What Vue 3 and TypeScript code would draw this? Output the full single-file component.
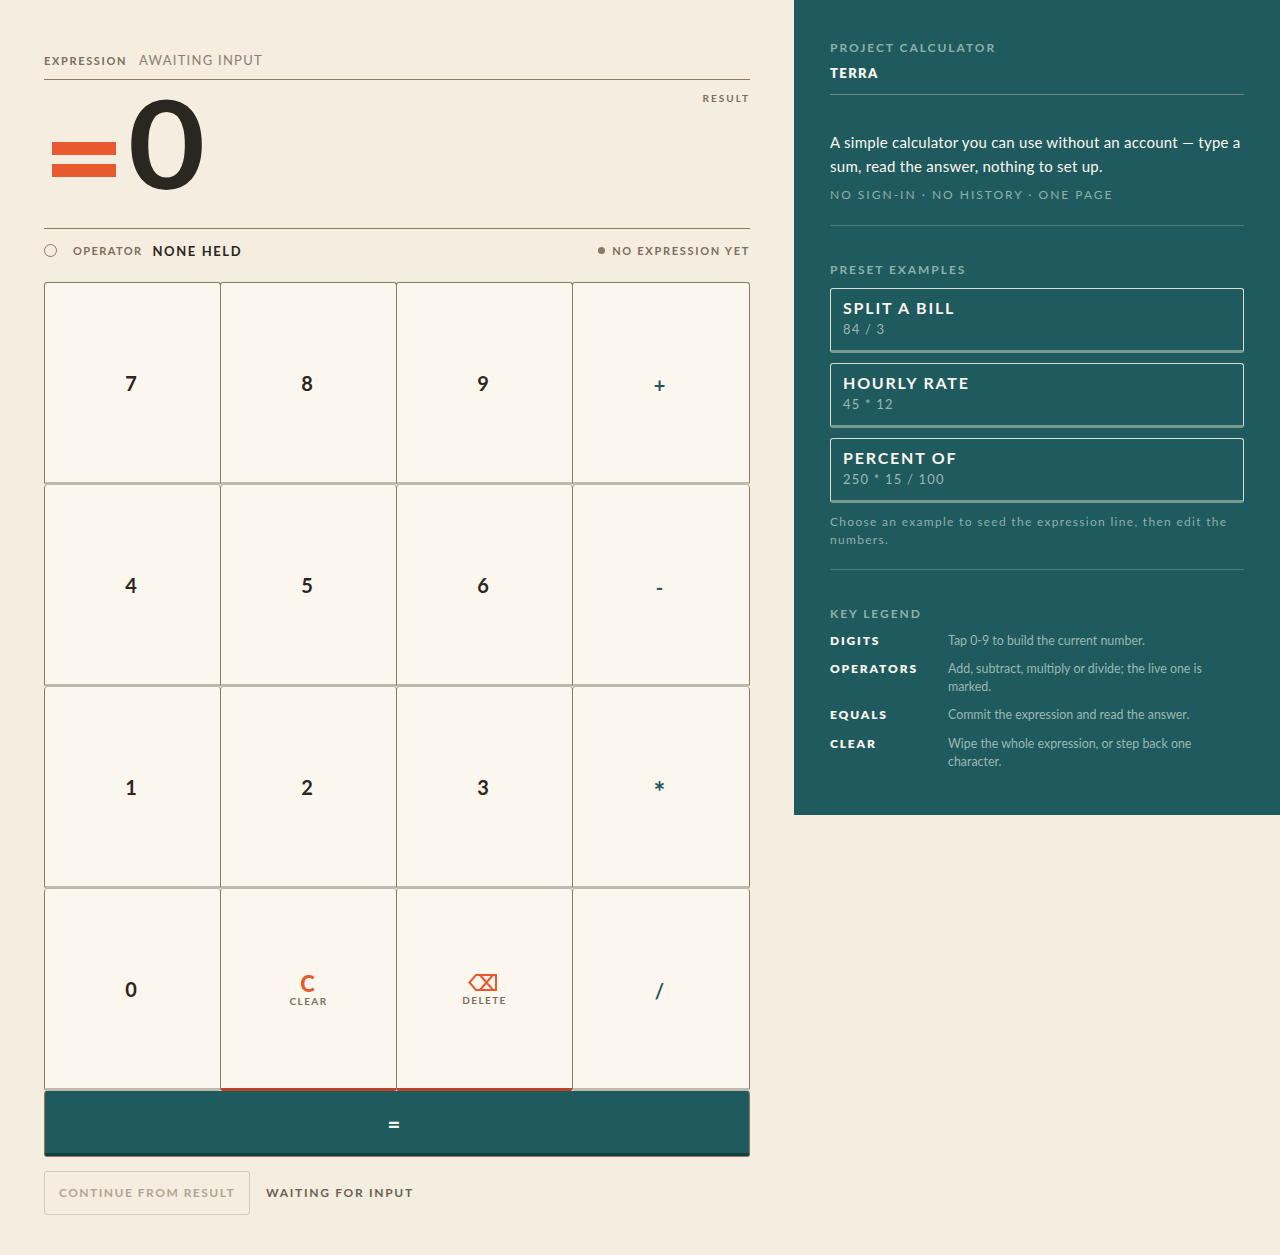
<script setup lang="ts">
interface KeyDef { label: string; kind: 'digit' | 'op' | 'clear' | 'del'; sub?: string }
const keys: KeyDef[] = [
  { label: '7', kind: 'digit' }, { label: '8', kind: 'digit' }, { label: '9', kind: 'digit' }, { label: '+', kind: 'op' },
  { label: '4', kind: 'digit' }, { label: '5', kind: 'digit' }, { label: '6', kind: 'digit' }, { label: '-', kind: 'op' },
  { label: '1', kind: 'digit' }, { label: '2', kind: 'digit' }, { label: '3', kind: 'digit' }, { label: '*', kind: 'op' },
  { label: '0', kind: 'digit' }, { label: 'C', kind: 'clear', sub: 'CLEAR' }, { label: '⌫', kind: 'del', sub: 'DELETE' }, { label: '/', kind: 'op' },
]
const presets = [
  { name: 'SPLIT A BILL', expr: '84 / 3' },
  { name: 'HOURLY RATE', expr: '45 * 12' },
  { name: 'PERCENT OF', expr: '250 * 15 / 100' },
]
const legend = [
  { k: 'DIGITS', v: 'Tap 0-9 to build the current number.' },
  { k: 'OPERATORS', v: 'Add, subtract, multiply or divide; the live one is marked.' },
  { k: 'EQUALS', v: 'Commit the expression and read the answer.' },
  { k: 'CLEAR', v: 'Wipe the whole expression, or step back one character.' },
]
</script>

<template>
  <div class="page">
    <main class="left">
      <div class="expr-row">
        <span class="expr-label">EXPRESSION</span>
        <span class="expr-value">AWAITING INPUT</span>
      </div>
      <div class="display">
        <div class="big"><span class="eq"><i></i><i></i></span><span class="zero">0</span></div>
        <span class="result-label">RESULT</span>
      </div>
      <div class="status">
        <div class="status-l">
          <span class="ring"></span>
          <span class="op-label">OPERATOR</span>
          <span class="op-value">NONE HELD</span>
        </div>
        <div class="status-r"><span class="dot"></span>NO EXPRESSION YET</div>
      </div>
      <div class="pad">
        <button v-for="k in keys" :key="k.label" class="key" :class="k.kind">
          <template v-if="k.kind === 'del'">
            <svg class="bs" width="29" height="17" viewBox="0 0 29 17" fill="none" stroke="#e8592f" stroke-width="2">
              <path d="M28 1H8L1.4 8.5 8 16h20z" />
              <path d="M12 1l13 15M25 1L12 16" />
            </svg>
          </template>
          <span v-else class="key-main">{{ k.label }}</span>
          <span v-if="k.sub" class="key-sub">{{ k.sub }}</span>
        </button>
        <button class="key-eq">=</button>
      </div>
      <div class="foot">
        <button class="continue">CONTINUE FROM RESULT</button>
        <span class="waiting">WAITING FOR INPUT</span>
      </div>
    </main>
    <aside class="side">
      <section class="head">
        <div class="s-title first">PROJECT CALCULATOR</div>
        <div class="brand">TERRA</div>
      </section>
      <section class="intro">
        <p class="lead">A simple calculator you can use without an account — type a sum, read the answer, nothing to set up.</p>
        <div class="tags">NO SIGN-IN · NO HISTORY · ONE PAGE</div>
      </section>
      <section class="presets">
        <div class="s-title">PRESET EXAMPLES</div>
        <div class="preset-list">
          <button v-for="p in presets" :key="p.name" class="preset">
            <span class="p-name">{{ p.name }}</span>
            <span class="p-expr">{{ p.expr }}</span>
          </button>
        </div>
        <p class="hint">Choose an example to seed the expression line, then edit the numbers.</p>
      </section>
      <section class="legend">
        <div class="s-title">KEY LEGEND</div>
        <dl class="legend-list">
          <div v-for="l in legend" :key="l.k" class="l-row">
            <dt>{{ l.k }}</dt>
            <dd>{{ l.v }}</dd>
          </div>
        </dl>
      </section>
    </aside>
  </div>
</template>

<style>
html, body { margin: 0; background: #f5ede0; }
</style>

<style scoped>
.page {
  display: grid;
  grid-template-columns: 794px 486px;
  align-items: start;
  height: 1255px;
  overflow: hidden;
  background: #f5ede0;
  font-family: "Lato", "Noto Sans", sans-serif;
  color: #2a2620;
}
.left { padding: 52px 44px 0; }
.expr-row {
  display: flex;
  align-items: baseline;
  gap: 12px;
  height: 27px;
  border-bottom: 1px solid #8a7a64;
}
.expr-label { font-size: 11px; font-weight: 700; letter-spacing: 1.65px; color: #7a6e5e; }
.expr-value { font-size: 13px; letter-spacing: 1.25px; color: #8a7f70; }
.display {
  display: flex;
  justify-content: space-between;
  align-items: flex-start;
  height: 148px;
  border-bottom: 1px solid #8a7a64;
}
.big { display: flex; align-items: center; height: 124px; }
.eq { display: flex; flex-direction: column; gap: 9px; margin: 0 12px 0 8px; padding-top: 35px; }
.eq i { display: block; width: 64px; height: 13px; background: #e8592f; }
.zero { font-size: 122px; line-height: 124px; font-weight: 700; color: #2a2620; transform: scaleX(1.09); transform-origin: left center; }
.result-label { font-size: 10px; font-weight: 700; letter-spacing: 2px; color: #7a6e5e; margin-top: 12px; }
.status {
  display: flex;
  justify-content: space-between;
  align-items: center;
  height: 43px;
  margin-bottom: 10px;
}
.status-l { display: flex; align-items: center; }
.ring { width: 11px; height: 11px; border: 1px solid #8a7a64; border-radius: 50%; margin-right: 16px; }
.op-label { font-size: 11px; font-weight: 700; letter-spacing: 1.4px; color: #7a6e5e; margin-right: 10px; }
.op-value { font-size: 13px; font-weight: 700; letter-spacing: 1.6px; color: #2a2620; }
.status-r { display: flex; align-items: center; font-size: 11px; font-weight: 700; letter-spacing: 1.7px; color: #7a6e5e; }
.dot { width: 7px; height: 7px; border-radius: 50%; background: #8a7a64; margin-right: 7px; }
.pad {
  display: grid;
  grid-template-columns: repeat(4, 176px);
  grid-template-rows: repeat(4, 202px) 66px;
  width: 706px;
}
.key {
  box-sizing: border-box;
  display: flex;
  flex-direction: column;
  align-items: center;
  justify-content: center;
  margin: 0;
  padding: 0;
  background: #fbf6ee;
  border: 1px solid #8a7a64;
  border-bottom: 3px solid #bfb8ac;
  border-radius: 3px;
  color: #2a2620;
  font-family: inherit;
  width: 177px;
  height: 203px;
}
.key:nth-child(n+5) { border-top: 0; margin-top: 1px; height: 202px; }
.key:nth-child(4n) { width: 178px; }
.key-main { font-size: 20px; font-weight: 700; line-height: 24px; }
.digit .key-main, .op .key-main { margin-right: 3px; }
.op .key-main { color: #1f5a5e; margin-top: 4px; }
.op:nth-child(12) .key-main { font-size: 28px; margin-top: 8px; }
.clear, .del { border-bottom-color: #bc4525; padding-top: 3px; }
.clear .key-main { color: #e8592f; font-size: 22px; font-weight: 900; line-height: 22px; margin-right: 2px; }
.bs { display: block; margin: 0 4px 3px 0; }
.key-sub { font-size: 10px; font-weight: 700; letter-spacing: 1.4px; color: #7a6e5e; line-height: 12px; }
.key-eq {
  grid-column: 1 / -1;
  box-sizing: border-box;
  width: 706px;
  height: 65px;
  margin-top: 1px;
  background: #1f5a5e;
  color: #fbf6ee;
  border: 1px solid #8a7a64;
  border-top-color: #1f5a5e;
  border-bottom: 3px solid #134044;
  box-shadow: 0 1px 0 #8a7a64;
  border-radius: 3px;
  font-family: inherit;
  font-size: 22px;
  font-weight: 900;
  padding: 4px 6px 0 0;
}
.foot { display: flex; align-items: center; gap: 16px; margin-top: 15px; }
.continue {
  box-sizing: border-box;
  height: 44px;
  width: 206px;
  background: transparent;
  border: 1px solid #d4cabb;
  border-radius: 3px;
  font-family: inherit;
  font-size: 12px;
  font-weight: 700;
  letter-spacing: 1.5px;
  color: #aea595;
  padding: 0 0 2px;
}
.waiting { font-size: 12px; font-weight: 700; letter-spacing: 1.7px; color: #6b6152; margin-bottom: 2px; }
.side {
  box-sizing: border-box;
  height: 815px;
  padding: 40px 36px 0;
  background: #1f5a5e;
  color: #fbf6ee;
}
.s-title { font-size: 12px; font-weight: 700; letter-spacing: 1.95px; color: #8fb0aa; line-height: 15px; }
.brand { font-size: 13px; font-weight: 800; letter-spacing: 1.4px; margin-top: 10px; line-height: 16px; color: #fbf6ee; }
.head { height: 54px; border-bottom: 1px solid #6f8a80; }
.intro { padding-top: 35px; height: 95px; border-bottom: 1px solid #4f7d7a; }
.lead { margin: 0; font-size: 15px; line-height: 24px; letter-spacing: .26px; color: #fbf6ee; }
.tags { font-size: 12px; font-weight: 400; letter-spacing: 2px; color: #8fb0aa; margin-top: 9px; line-height: 15px; }
.presets { padding-top: 36px; height: 307px; border-bottom: 1px solid #4f7d7a; }
.preset-list { display: flex; flex-direction: column; gap: 10px; margin-top: 11px; }
.preset {
  box-sizing: border-box;
  display: flex;
  flex-direction: column;
  align-items: flex-start;
  height: 65px;
  padding: 9px 12px 0;
  background: transparent;
  border: 1px solid #d6dfd6;
  border-bottom: 3px solid #789a94;
  border-radius: 3px;
  font-family: inherit;
  color: #fbf6ee;
}
.p-name { font-size: 16px; font-weight: 700; letter-spacing: 1.8px; line-height: 19px; }
.p-expr { font-size: 13px; letter-spacing: 1.2px; color: #9cb8b2; line-height: 18px; margin-top: 3px; }
.hint { margin: 10px 0 0; font-size: 12px; font-weight: 400; line-height: 18px; letter-spacing: 1.3px; color: #8fb0aa; }
.legend { padding-top: 36px; }
.legend-list { margin: 10.6px 0 0; }
.l-row { display: grid; grid-template-columns: 118px 1fr; margin-bottom: 10px; }
.l-row:last-child { margin-top: 11px; }
.l-row dt { font-size: 12px; font-weight: 800; letter-spacing: 1.85px; line-height: 18px; color: #fbf6ee; }
.l-row dd { margin: 0; font-size: 12.4px; line-height: 18px; color: #9cb8b2; }
</style>
